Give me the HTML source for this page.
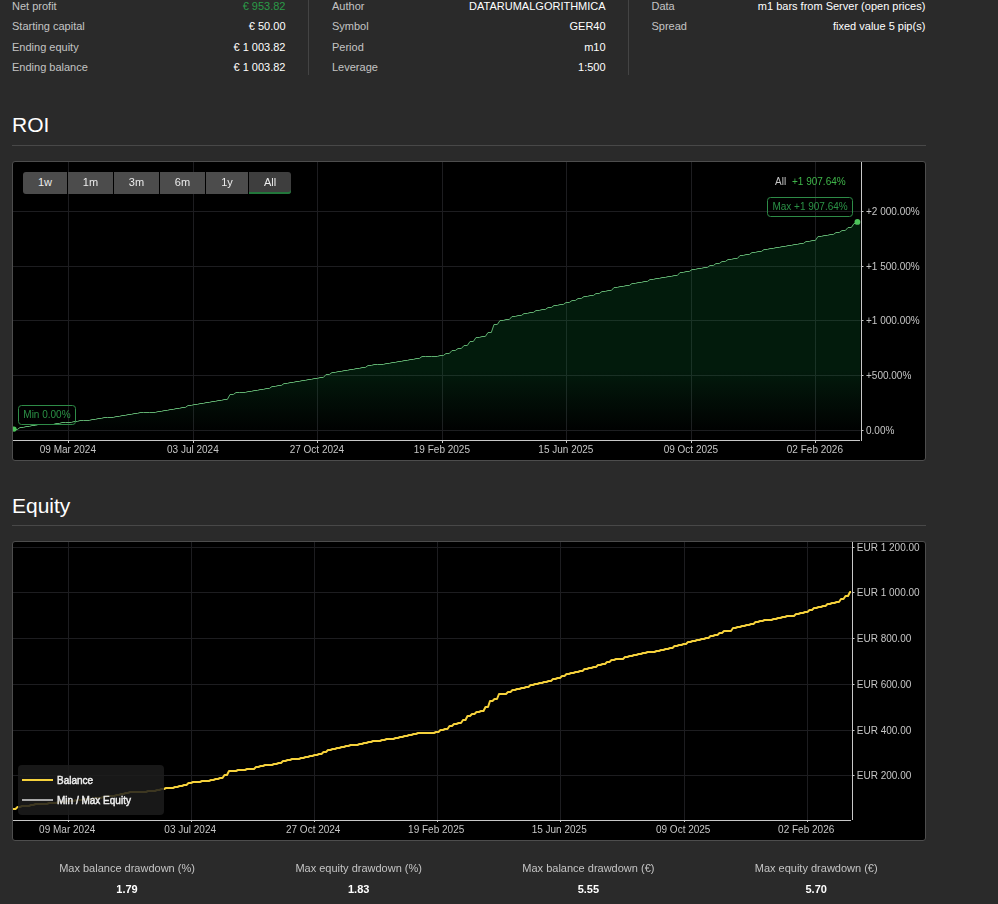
<!DOCTYPE html>
<html><head><meta charset="utf-8"><style>
html,body{margin:0;padding:0;}
body{width:998px;height:904px;overflow:hidden;background:#2a2a2a;position:relative;font-family:"Liberation Sans",sans-serif;}
.lab,.val{position:absolute;font-size:11px;line-height:14px;white-space:nowrap;}
.lab{color:#c4c4c4;}
.val{color:#fff;}
.val.green{color:#2a9a48;}
.sep{position:absolute;top:0;width:1px;height:75px;background:#444;}
h2{position:absolute;margin:0;left:12px;font-size:21px;font-weight:normal;color:#fff;line-height:24px;}
.hr{position:absolute;left:12px;width:914px;height:1px;background:#484848;}
svg{position:absolute;left:0;top:0;will-change:transform;}
.ax{font-size:10px;fill:#c6c6c6;font-family:"Liberation Sans",sans-serif;}
.gl{font-size:10px;fill:#2b9246;font-family:"Liberation Sans",sans-serif;}
.lg{font-size:10px;fill:#eee;font-family:"Liberation Sans",sans-serif;stroke:#eee;stroke-width:0.45px;}
.btn{position:absolute;top:172px;height:22px;line-height:21px;background:#4c4c4c;color:#ececec;font-size:11px;text-align:center;}
.btn.first{border-radius:3px 0 0 3px;}
.btn.last{border-radius:0 3px 3px 0;}
.btn.sel{background:#3e3e3e;box-shadow:inset 0 -2px 0 #22773b;}
.blab,.bval{position:absolute;width:200px;text-align:center;font-size:11px;line-height:14px;white-space:nowrap;}
.blab{color:#c4c4c4;}
.bval{color:#fff;font-weight:bold;}
</style></head><body>
<div class="lab" style="left:12px;top:-1px">Net profit</div>
<div class="val green" style="right:712.5px;top:-1px">€ 953.82</div>
<div class="lab" style="left:12px;top:19px">Starting capital</div>
<div class="val" style="right:712.5px;top:19px">€ 50.00</div>
<div class="lab" style="left:12px;top:40px">Ending equity</div>
<div class="val" style="right:712.5px;top:40px">€ 1 003.82</div>
<div class="lab" style="left:12px;top:60px">Ending balance</div>
<div class="val" style="right:712.5px;top:60px">€ 1 003.82</div>
<div class="lab" style="left:332px;top:-1px">Author</div>
<div class="val" style="right:392.4px;top:-1px">DATARUMALGORITHMICA</div>
<div class="lab" style="left:332px;top:19px">Symbol</div>
<div class="val" style="right:392.4px;top:19px">GER40</div>
<div class="lab" style="left:332px;top:40px">Period</div>
<div class="val" style="right:392.4px;top:40px">m10</div>
<div class="lab" style="left:332px;top:60px">Leverage</div>
<div class="val" style="right:392.4px;top:60px">1:500</div>
<div class="lab" style="left:651.5px;top:-1px">Data</div>
<div class="val" style="right:72.70000000000005px;top:-1px">m1 bars from Server (open prices)</div>
<div class="lab" style="left:651.5px;top:19px">Spread</div>
<div class="val" style="right:72.70000000000005px;top:19px">fixed value 5 pip(s)</div>
<div class="sep" style="left:308px"></div>
<div class="sep" style="left:628px"></div>
<h2 style="top:113px">ROI</h2>
<div class="hr" style="top:145px"></div>
<h2 style="top:494px">Equity</h2>
<div class="hr" style="top:525px"></div>
<svg width="998" height="904" viewBox="0 0 998 904">
<rect x="12.5" y="161.5" width="913" height="299" rx="2.5" fill="#000" stroke="#4d4d4d"/>
<line x1="68.5" y1="162" x2="68.5" y2="440" stroke="#1d1d20"/>
<line x1="193.5" y1="162" x2="193.5" y2="440" stroke="#1d1d20"/>
<line x1="317.5" y1="162" x2="317.5" y2="440" stroke="#1d1d20"/>
<line x1="442.5" y1="162" x2="442.5" y2="440" stroke="#1d1d20"/>
<line x1="566.5" y1="162" x2="566.5" y2="440" stroke="#1d1d20"/>
<line x1="691.5" y1="162" x2="691.5" y2="440" stroke="#1d1d20"/>
<line x1="815.5" y1="162" x2="815.5" y2="440" stroke="#1d1d20"/>
<line x1="13" y1="430.5" x2="861" y2="430.5" stroke="#1d1d20"/>
<line x1="13" y1="375.5" x2="861" y2="375.5" stroke="#1d1d20"/>
<line x1="13" y1="320.5" x2="861" y2="320.5" stroke="#1d1d20"/>
<line x1="13" y1="266.5" x2="861" y2="266.5" stroke="#1d1d20"/>
<line x1="13" y1="211.5" x2="861" y2="211.5" stroke="#1d1d20"/>
<defs><linearGradient id="g1" x1="0" y1="0" x2="0" y2="1"><stop offset="0" stop-color="rgb(10,135,60)" stop-opacity="0.2"/><stop offset="0.68" stop-color="rgb(10,135,60)" stop-opacity="0.2"/><stop offset="0.97" stop-color="rgb(20,130,70)" stop-opacity="0"/></linearGradient></defs>
<path d="M14.0,429.5 L17.3,429.5 L20.0,427.5 L23.3,427.5 L26.0,426.5 L29.3,426.5 L32.0,425.5 L35.3,425.5 L38.0,424.5 L41.3,424.5 L44.0,424.5 L47.3,424.5 L50.0,424.5 L53.3,424.5 L56.0,423.5 L59.3,423.5 L62.0,422.5 L65.3,422.5 L68.0,422.5 L71.3,422.5 L74.0,421.5 L77.3,421.5 L80.0,420.5 L83.3,420.5 L86.0,420.5 L89.3,420.5 L92.0,419.5 L95.3,419.5 L98.0,418.5 L101.3,418.5 L104.0,417.5 L107.3,417.5 L110.0,417.5 L113.3,417.5 L116.0,416.5 L119.3,416.5 L122.0,415.5 L125.3,415.5 L128.0,414.5 L131.3,414.5 L134.0,413.5 L137.3,413.5 L140.0,412.5 L143.3,412.5 L146.0,412.5 L149.3,412.5 L152.0,412.5 L155.3,412.5 L158.0,411.5 L161.3,411.5 L164.0,410.5 L167.3,410.5 L170.0,409.5 L173.3,409.5 L176.0,408.5 L179.3,408.5 L182.0,407.5 L185.3,407.5 L188.0,405.5 L191.3,405.5 L194.0,404.5 L197.3,404.5 L200.0,403.5 L203.3,403.5 L206.0,402.5 L209.3,402.5 L212.0,401.5 L215.3,401.5 L218.0,400.5 L221.3,400.5 L224.0,399.5 L227.3,399.5 L230.0,394.5 L233.3,394.5 L236.0,392.5 L239.3,392.5 L242.0,392.5 L245.3,392.5 L248.0,391.5 L251.3,391.5 L254.0,390.5 L257.3,390.5 L260.0,389.5 L263.3,389.5 L266.0,388.5 L269.3,388.5 L272.0,386.5 L275.3,386.5 L278.0,385.5 L281.3,385.5 L284.0,383.5 L287.3,383.5 L290.0,382.5 L293.3,382.5 L296.0,381.5 L299.3,381.5 L302.0,380.5 L305.3,380.5 L308.0,379.5 L311.3,379.5 L314.0,378.5 L317.3,378.5 L320.0,377.5 L323.3,377.5 L326.0,374.5 L329.3,374.5 L332.0,372.5 L335.3,372.5 L338.0,371.5 L341.3,371.5 L344.0,370.5 L347.3,370.5 L350.0,369.5 L353.3,369.5 L356.0,368.5 L359.3,368.5 L362.0,367.5 L365.3,367.5 L368.0,365.5 L371.3,365.5 L374.0,364.5 L377.3,364.5 L380.0,364.5 L383.3,364.5 L386.0,363.5 L389.3,363.5 L392.0,362.5 L395.3,362.5 L398.0,361.5 L401.3,361.5 L404.0,360.5 L407.3,360.5 L410.0,359.5 L413.3,359.5 L416.0,358.5 L419.3,358.5 L422.0,356.5 L425.3,356.5 L428.0,356.5 L431.3,356.5 L434.0,356.5 L437.3,356.5 L440.0,355.5 L443.3,355.5 L446.0,353.5 L449.3,353.5 L452.0,350.5 L455.3,350.5 L458.0,348.5 L461.3,348.5 L464.0,345.5 L467.3,345.5 L470.0,341.5 L473.3,341.5 L476.0,337.5 L479.3,337.5 L482.0,336.5 L485.3,336.5 L488.0,332.5 L491.3,332.5 L494.0,324.5 L497.3,324.5 L500.0,320.5 L503.3,320.5 L506.0,319.5 L509.3,319.5 L512.0,316.5 L515.3,316.5 L518.0,315.5 L521.3,315.5 L524.0,313.5 L527.3,313.5 L530.0,312.5 L533.3,312.5 L536.0,310.5 L539.3,310.5 L542.0,309.5 L545.3,309.5 L548.0,307.5 L551.3,307.5 L554.0,305.5 L557.3,305.5 L560.0,304.5 L563.3,304.5 L566.0,302.5 L569.3,302.5 L572.0,300.5 L575.3,300.5 L578.0,298.5 L581.3,298.5 L584.0,296.5 L587.3,296.5 L590.0,295.5 L593.3,295.5 L596.0,293.5 L599.3,293.5 L602.0,291.5 L605.3,291.5 L608.0,290.5 L611.3,290.5 L614.0,287.5 L617.3,287.5 L620.0,286.5 L623.3,286.5 L626.0,285.5 L629.3,285.5 L632.0,283.5 L635.3,283.5 L638.0,282.5 L641.3,282.5 L644.0,281.5 L647.3,281.5 L650.0,279.5 L653.3,279.5 L656.0,278.5 L659.3,278.5 L662.0,277.5 L665.3,277.5 L668.0,276.5 L671.3,276.5 L674.0,275.5 L677.3,275.5 L680.0,272.5 L683.3,272.5 L686.0,271.5 L689.3,271.5 L692.0,269.5 L695.3,269.5 L698.0,268.5 L701.3,268.5 L704.0,267.5 L707.3,267.5 L710.0,265.5 L713.3,265.5 L716.0,263.5 L719.3,263.5 L722.0,261.5 L725.3,261.5 L728.0,259.5 L731.3,259.5 L734.0,258.5 L737.3,258.5 L740.0,255.5 L743.3,255.5 L746.0,254.5 L749.3,254.5 L752.0,252.5 L755.3,252.5 L758.0,251.5 L761.3,251.5 L764.0,249.5 L767.3,249.5 L770.0,248.5 L773.3,248.5 L776.0,247.5 L779.3,247.5 L782.0,246.5 L785.3,246.5 L788.0,245.5 L791.3,245.5 L794.0,244.5 L797.3,244.5 L800.0,243.5 L803.3,243.5 L806.0,241.5 L809.3,241.5 L812.0,240.5 L815.3,240.5 L818.0,236.5 L821.3,236.5 L824.0,235.5 L827.3,235.5 L830.0,234.5 L833.3,234.5 L836.0,232.5 L839.3,232.5 L842.0,230.5 L845.3,230.5 L848.0,227.5 L851.3,227.5 L854.0,223.5 L855.9,223.5 L857.4,221.5 L857.4,221.5 L860.3,221 L860.3,440 L14,440 Z" fill="url(#g1)"/>
<path d="M14.0,429.5 L17.3,429.5 L20.0,427.5 L23.3,427.5 L26.0,426.5 L29.3,426.5 L32.0,425.5 L35.3,425.5 L38.0,424.5 L41.3,424.5 L44.0,424.5 L47.3,424.5 L50.0,424.5 L53.3,424.5 L56.0,423.5 L59.3,423.5 L62.0,422.5 L65.3,422.5 L68.0,422.5 L71.3,422.5 L74.0,421.5 L77.3,421.5 L80.0,420.5 L83.3,420.5 L86.0,420.5 L89.3,420.5 L92.0,419.5 L95.3,419.5 L98.0,418.5 L101.3,418.5 L104.0,417.5 L107.3,417.5 L110.0,417.5 L113.3,417.5 L116.0,416.5 L119.3,416.5 L122.0,415.5 L125.3,415.5 L128.0,414.5 L131.3,414.5 L134.0,413.5 L137.3,413.5 L140.0,412.5 L143.3,412.5 L146.0,412.5 L149.3,412.5 L152.0,412.5 L155.3,412.5 L158.0,411.5 L161.3,411.5 L164.0,410.5 L167.3,410.5 L170.0,409.5 L173.3,409.5 L176.0,408.5 L179.3,408.5 L182.0,407.5 L185.3,407.5 L188.0,405.5 L191.3,405.5 L194.0,404.5 L197.3,404.5 L200.0,403.5 L203.3,403.5 L206.0,402.5 L209.3,402.5 L212.0,401.5 L215.3,401.5 L218.0,400.5 L221.3,400.5 L224.0,399.5 L227.3,399.5 L230.0,394.5 L233.3,394.5 L236.0,392.5 L239.3,392.5 L242.0,392.5 L245.3,392.5 L248.0,391.5 L251.3,391.5 L254.0,390.5 L257.3,390.5 L260.0,389.5 L263.3,389.5 L266.0,388.5 L269.3,388.5 L272.0,386.5 L275.3,386.5 L278.0,385.5 L281.3,385.5 L284.0,383.5 L287.3,383.5 L290.0,382.5 L293.3,382.5 L296.0,381.5 L299.3,381.5 L302.0,380.5 L305.3,380.5 L308.0,379.5 L311.3,379.5 L314.0,378.5 L317.3,378.5 L320.0,377.5 L323.3,377.5 L326.0,374.5 L329.3,374.5 L332.0,372.5 L335.3,372.5 L338.0,371.5 L341.3,371.5 L344.0,370.5 L347.3,370.5 L350.0,369.5 L353.3,369.5 L356.0,368.5 L359.3,368.5 L362.0,367.5 L365.3,367.5 L368.0,365.5 L371.3,365.5 L374.0,364.5 L377.3,364.5 L380.0,364.5 L383.3,364.5 L386.0,363.5 L389.3,363.5 L392.0,362.5 L395.3,362.5 L398.0,361.5 L401.3,361.5 L404.0,360.5 L407.3,360.5 L410.0,359.5 L413.3,359.5 L416.0,358.5 L419.3,358.5 L422.0,356.5 L425.3,356.5 L428.0,356.5 L431.3,356.5 L434.0,356.5 L437.3,356.5 L440.0,355.5 L443.3,355.5 L446.0,353.5 L449.3,353.5 L452.0,350.5 L455.3,350.5 L458.0,348.5 L461.3,348.5 L464.0,345.5 L467.3,345.5 L470.0,341.5 L473.3,341.5 L476.0,337.5 L479.3,337.5 L482.0,336.5 L485.3,336.5 L488.0,332.5 L491.3,332.5 L494.0,324.5 L497.3,324.5 L500.0,320.5 L503.3,320.5 L506.0,319.5 L509.3,319.5 L512.0,316.5 L515.3,316.5 L518.0,315.5 L521.3,315.5 L524.0,313.5 L527.3,313.5 L530.0,312.5 L533.3,312.5 L536.0,310.5 L539.3,310.5 L542.0,309.5 L545.3,309.5 L548.0,307.5 L551.3,307.5 L554.0,305.5 L557.3,305.5 L560.0,304.5 L563.3,304.5 L566.0,302.5 L569.3,302.5 L572.0,300.5 L575.3,300.5 L578.0,298.5 L581.3,298.5 L584.0,296.5 L587.3,296.5 L590.0,295.5 L593.3,295.5 L596.0,293.5 L599.3,293.5 L602.0,291.5 L605.3,291.5 L608.0,290.5 L611.3,290.5 L614.0,287.5 L617.3,287.5 L620.0,286.5 L623.3,286.5 L626.0,285.5 L629.3,285.5 L632.0,283.5 L635.3,283.5 L638.0,282.5 L641.3,282.5 L644.0,281.5 L647.3,281.5 L650.0,279.5 L653.3,279.5 L656.0,278.5 L659.3,278.5 L662.0,277.5 L665.3,277.5 L668.0,276.5 L671.3,276.5 L674.0,275.5 L677.3,275.5 L680.0,272.5 L683.3,272.5 L686.0,271.5 L689.3,271.5 L692.0,269.5 L695.3,269.5 L698.0,268.5 L701.3,268.5 L704.0,267.5 L707.3,267.5 L710.0,265.5 L713.3,265.5 L716.0,263.5 L719.3,263.5 L722.0,261.5 L725.3,261.5 L728.0,259.5 L731.3,259.5 L734.0,258.5 L737.3,258.5 L740.0,255.5 L743.3,255.5 L746.0,254.5 L749.3,254.5 L752.0,252.5 L755.3,252.5 L758.0,251.5 L761.3,251.5 L764.0,249.5 L767.3,249.5 L770.0,248.5 L773.3,248.5 L776.0,247.5 L779.3,247.5 L782.0,246.5 L785.3,246.5 L788.0,245.5 L791.3,245.5 L794.0,244.5 L797.3,244.5 L800.0,243.5 L803.3,243.5 L806.0,241.5 L809.3,241.5 L812.0,240.5 L815.3,240.5 L818.0,236.5 L821.3,236.5 L824.0,235.5 L827.3,235.5 L830.0,234.5 L833.3,234.5 L836.0,232.5 L839.3,232.5 L842.0,230.5 L845.3,230.5 L848.0,227.5 L851.3,227.5 L854.0,223.5 L855.9,223.5 L857.4,221.5 L857.4,221.5" fill="none" stroke="#60b070" stroke-width="1"/>
<line x1="861.5" y1="162" x2="861.5" y2="441" stroke="#c8c8c8"/>
<line x1="13" y1="440.5" x2="860" y2="440.5" stroke="#c8c8c8"/>
<line x1="862" y1="430.5" x2="863.5" y2="430.5" stroke="#c8c8c8"/>
<text x="866" y="433.5" class="ax">0.00%</text>
<line x1="862" y1="375.5" x2="863.5" y2="375.5" stroke="#c8c8c8"/>
<text x="866" y="378.5" class="ax">+500.00%</text>
<line x1="862" y1="320.5" x2="863.5" y2="320.5" stroke="#c8c8c8"/>
<text x="866" y="323.5" class="ax">+1 000.00%</text>
<line x1="862" y1="266.5" x2="863.5" y2="266.5" stroke="#c8c8c8"/>
<text x="866" y="269.5" class="ax">+1 500.00%</text>
<line x1="862" y1="211.5" x2="863.5" y2="211.5" stroke="#c8c8c8"/>
<text x="866" y="214.5" class="ax">+2 000.00%</text>
<line x1="68.5" y1="441" x2="68.5" y2="443" stroke="#c8c8c8"/>
<text x="67.9" y="453" class="ax" text-anchor="middle">09 Mar 2024</text>
<line x1="193.5" y1="441" x2="193.5" y2="443" stroke="#c8c8c8"/>
<text x="192.9" y="453" class="ax" text-anchor="middle">03 Jul 2024</text>
<line x1="317.5" y1="441" x2="317.5" y2="443" stroke="#c8c8c8"/>
<text x="316.9" y="453" class="ax" text-anchor="middle">27 Oct 2024</text>
<line x1="442.5" y1="441" x2="442.5" y2="443" stroke="#c8c8c8"/>
<text x="441.9" y="453" class="ax" text-anchor="middle">19 Feb 2025</text>
<line x1="566.5" y1="441" x2="566.5" y2="443" stroke="#c8c8c8"/>
<text x="565.9" y="453" class="ax" text-anchor="middle">15 Jun 2025</text>
<line x1="691.5" y1="441" x2="691.5" y2="443" stroke="#c8c8c8"/>
<text x="690.9" y="453" class="ax" text-anchor="middle">09 Oct 2025</text>
<line x1="815.5" y1="441" x2="815.5" y2="443" stroke="#c8c8c8"/>
<text x="814.9" y="453" class="ax" text-anchor="middle">02 Feb 2026</text>
<defs><clipPath id="pc"><rect x="13" y="162" width="848" height="278"/></clipPath></defs>
<circle cx="14" cy="429.1" r="2.6" fill="#4cc35a" clip-path="url(#pc)"/>
<circle cx="857.4" cy="221.9" r="2.9" fill="#4cc35a"/>
<rect x="18.5" y="405.5" width="57" height="19" rx="3" fill="none" stroke="#2e8b47"/>
<text x="23.3" y="418" class="gl">Min 0.00%</text>
<rect x="767.5" y="197.5" width="85" height="19" rx="3" fill="none" stroke="#2e8b47"/>
<text x="772.4" y="210" class="gl">Max +1 907.64%</text>
<text x="775" y="185" class="ax">All</text>
<text x="792" y="185" class="ax" fill="#3fb54a" style="fill:#3fb54a">+1 907.64%</text>
<rect x="12.5" y="541.5" width="913" height="299" rx="2.5" fill="#000" stroke="#4d4d4d"/>
<line x1="68.5" y1="542" x2="68.5" y2="820" stroke="#1d1d20"/>
<line x1="191.5" y1="542" x2="191.5" y2="820" stroke="#1d1d20"/>
<line x1="314.5" y1="542" x2="314.5" y2="820" stroke="#1d1d20"/>
<line x1="437.5" y1="542" x2="437.5" y2="820" stroke="#1d1d20"/>
<line x1="560.5" y1="542" x2="560.5" y2="820" stroke="#1d1d20"/>
<line x1="684.5" y1="542" x2="684.5" y2="820" stroke="#1d1d20"/>
<line x1="807.5" y1="542" x2="807.5" y2="820" stroke="#1d1d20"/>
<line x1="13" y1="775.5" x2="852" y2="775.5" stroke="#1d1d20"/>
<line x1="13" y1="730.5" x2="852" y2="730.5" stroke="#1d1d20"/>
<line x1="13" y1="684.5" x2="852" y2="684.5" stroke="#1d1d20"/>
<line x1="13" y1="638.5" x2="852" y2="638.5" stroke="#1d1d20"/>
<line x1="13" y1="592.5" x2="852" y2="592.5" stroke="#1d1d20"/>
<line x1="13" y1="547.5" x2="852" y2="547.5" stroke="#1d1d20"/>
<path d="M13.0,809.0 L15.5,809.0 L17.5,807.0 L20.0,807.0 L22.0,806.0 L24.5,806.0 L26.5,806.0 L29.0,806.0 L31.0,805.0 L33.5,805.0 L35.5,804.0 L38.0,804.0 L40.0,804.0 L42.5,804.0 L44.5,804.0 L47.0,804.0 L49.0,803.0 L51.5,803.0 L53.5,803.0 L56.0,803.0 L58.0,802.0 L60.5,802.0 L62.5,802.0 L65.0,802.0 L67.0,801.0 L69.5,801.0 L71.5,801.0 L74.0,801.0 L76.0,800.0 L78.5,800.0 L80.5,800.0 L83.0,800.0 L85.0,799.0 L87.5,799.0 L89.5,799.0 L92.0,799.0 L94.0,798.0 L96.5,798.0 L98.5,798.0 L101.0,798.0 L103.0,797.0 L105.5,797.0 L107.5,796.0 L110.0,796.0 L112.0,796.0 L114.5,796.0 L116.5,795.0 L119.0,795.0 L121.0,794.0 L123.5,794.0 L125.5,793.0 L128.0,793.0 L130.0,792.0 L132.5,792.0 L134.5,792.0 L137.0,792.0 L139.0,792.0 L141.5,792.0 L143.5,792.0 L146.0,792.0 L148.0,791.0 L150.5,791.0 L152.5,791.0 L155.0,791.0 L157.0,790.0 L159.5,790.0 L161.5,789.0 L164.0,789.0 L166.0,788.0 L168.5,788.0 L170.5,788.0 L173.0,788.0 L175.0,787.0 L177.5,787.0 L179.5,786.0 L182.0,786.0 L184.0,785.0 L186.5,785.0 L188.5,783.0 L191.0,783.0 L193.0,782.0 L195.5,782.0 L197.5,782.0 L200.0,782.0 L202.0,781.0 L204.5,781.0 L206.5,781.0 L209.0,781.0 L211.0,780.0 L213.5,780.0 L215.5,779.0 L218.0,779.0 L220.0,778.0 L222.5,778.0 L224.5,775.0 L227.0,775.0 L229.0,771.0 L231.5,771.0 L233.5,771.0 L236.0,771.0 L238.0,770.0 L240.5,770.0 L242.5,770.0 L245.0,770.0 L247.0,769.0 L249.5,769.0 L251.5,769.0 L254.0,769.0 L256.0,767.0 L258.5,767.0 L260.5,766.0 L263.0,766.0 L265.0,765.0 L267.5,765.0 L269.5,765.0 L272.0,765.0 L274.0,764.0 L276.5,764.0 L278.5,763.0 L281.0,763.0 L283.0,761.0 L285.5,761.0 L287.5,760.0 L290.0,760.0 L292.0,759.0 L294.5,759.0 L296.5,759.0 L299.0,759.0 L301.0,758.0 L303.5,758.0 L305.5,757.0 L308.0,757.0 L310.0,756.0 L312.5,756.0 L314.5,755.0 L317.0,755.0 L319.0,754.0 L321.5,754.0 L323.5,752.0 L326.0,752.0 L328.0,750.0 L330.5,750.0 L332.5,749.0 L335.0,749.0 L337.0,748.0 L339.5,748.0 L341.5,747.0 L344.0,747.0 L346.0,746.0 L348.5,746.0 L350.5,745.0 L353.0,745.0 L355.0,745.0 L357.5,745.0 L359.5,744.0 L362.0,744.0 L364.0,743.0 L366.5,743.0 L368.5,742.0 L371.0,742.0 L373.0,741.0 L375.5,741.0 L377.5,741.0 L380.0,741.0 L382.0,740.0 L384.5,740.0 L386.5,739.0 L389.0,739.0 L391.0,739.0 L393.5,739.0 L395.5,738.0 L398.0,738.0 L400.0,737.0 L402.5,737.0 L404.5,736.0 L407.0,736.0 L409.0,735.0 L411.5,735.0 L413.5,734.0 L416.0,734.0 L418.0,733.0 L420.5,733.0 L422.5,733.0 L425.0,733.0 L427.0,733.0 L429.5,733.0 L431.5,733.0 L434.0,733.0 L436.0,732.0 L438.5,732.0 L440.5,730.0 L443.0,730.0 L445.0,729.0 L447.5,729.0 L449.5,726.0 L452.0,726.0 L454.0,724.0 L456.5,724.0 L458.5,723.0 L461.0,723.0 L463.0,720.0 L465.5,720.0 L467.5,716.0 L470.0,716.0 L472.0,714.0 L474.5,714.0 L476.5,712.0 L479.0,712.0 L481.0,711.0 L483.5,711.0 L485.5,707.0 L488.0,707.0 L490.0,701.0 L492.5,701.0 L494.5,699.0 L497.0,699.0 L499.0,694.0 L501.5,694.0 L503.5,694.0 L506.0,694.0 L508.0,692.0 L510.5,692.0 L512.5,690.0 L515.0,690.0 L517.0,689.0 L519.5,689.0 L521.5,688.0 L524.0,688.0 L526.0,687.0 L528.5,687.0 L530.5,685.0 L533.0,685.0 L535.0,684.0 L537.5,684.0 L539.5,683.0 L542.0,683.0 L544.0,682.0 L546.5,682.0 L548.5,681.0 L551.0,681.0 L553.0,679.0 L555.5,679.0 L557.5,678.0 L560.0,678.0 L562.0,676.0 L564.5,676.0 L566.5,674.0 L569.0,674.0 L571.0,673.0 L573.5,673.0 L575.5,672.0 L578.0,672.0 L580.0,671.0 L582.5,671.0 L584.5,669.0 L587.0,669.0 L589.0,668.0 L591.5,668.0 L593.5,667.0 L596.0,667.0 L598.0,665.0 L600.5,665.0 L602.5,664.0 L605.0,664.0 L607.0,662.0 L609.5,662.0 L611.5,660.0 L614.0,660.0 L616.0,659.0 L618.5,659.0 L620.5,659.0 L623.0,659.0 L625.0,657.0 L627.5,657.0 L629.5,656.0 L632.0,656.0 L634.0,655.0 L636.5,655.0 L638.5,654.0 L641.0,654.0 L643.0,653.0 L645.5,653.0 L647.5,652.0 L650.0,652.0 L652.0,652.0 L654.5,652.0 L656.5,651.0 L659.0,651.0 L661.0,650.0 L663.5,650.0 L665.5,649.0 L668.0,649.0 L670.0,648.0 L672.5,648.0 L674.5,646.0 L677.0,646.0 L679.0,645.0 L681.5,645.0 L683.5,644.0 L686.0,644.0 L688.0,642.0 L690.5,642.0 L692.5,641.0 L695.0,641.0 L697.0,640.0 L699.5,640.0 L701.5,639.0 L704.0,639.0 L706.0,638.0 L708.5,638.0 L710.5,636.0 L713.0,636.0 L715.0,635.0 L717.5,635.0 L719.5,633.0 L722.0,633.0 L724.0,631.0 L726.5,631.0 L728.5,631.0 L731.0,631.0 L733.0,628.0 L735.5,628.0 L737.5,627.0 L740.0,627.0 L742.0,626.0 L744.5,626.0 L746.5,625.0 L749.0,625.0 L751.0,624.0 L753.5,624.0 L755.5,622.0 L758.0,622.0 L760.0,621.0 L762.5,621.0 L764.5,620.0 L767.0,620.0 L769.0,620.0 L771.5,620.0 L773.5,619.0 L776.0,619.0 L778.0,618.0 L780.5,618.0 L782.5,617.0 L785.0,617.0 L787.0,616.0 L789.5,616.0 L791.5,616.0 L794.0,616.0 L796.0,614.0 L798.5,614.0 L800.5,613.0 L803.0,613.0 L805.0,612.0 L807.5,612.0 L809.5,610.0 L812.0,610.0 L814.0,608.0 L816.5,608.0 L818.5,607.0 L821.0,607.0 L823.0,606.0 L825.5,606.0 L827.5,604.0 L830.0,604.0 L832.0,603.0 L834.5,603.0 L836.5,602.0 L839.0,602.0 L841.0,599.0 L843.5,599.0 L845.5,596.0 L848.0,596.0 L850.0,592.0 L850.5,592.0 L851.0,592.0 L851.0,592.0" fill="none" stroke="#f6d23c" stroke-width="2" stroke-linejoin="round"/>
<line x1="852.5" y1="542" x2="852.5" y2="820" stroke="#c8c8c8"/>
<line x1="13" y1="820.5" x2="851" y2="820.5" stroke="#c8c8c8"/>
<line x1="853" y1="775.5" x2="854.5" y2="775.5" stroke="#c8c8c8"/>
<text x="856.8" y="778.5" class="ax">EUR 200.00</text>
<line x1="853" y1="730.5" x2="854.5" y2="730.5" stroke="#c8c8c8"/>
<text x="856.8" y="733.5" class="ax">EUR 400.00</text>
<line x1="853" y1="684.5" x2="854.5" y2="684.5" stroke="#c8c8c8"/>
<text x="856.8" y="687.5" class="ax">EUR 600.00</text>
<line x1="853" y1="638.5" x2="854.5" y2="638.5" stroke="#c8c8c8"/>
<text x="856.8" y="641.5" class="ax">EUR 800.00</text>
<line x1="853" y1="592.5" x2="854.5" y2="592.5" stroke="#c8c8c8"/>
<text x="856.8" y="595.5" class="ax">EUR 1 000.00</text>
<line x1="853" y1="547.5" x2="854.5" y2="547.5" stroke="#c8c8c8"/>
<text x="856.8" y="550.5" class="ax">EUR 1 200.00</text>
<line x1="68.5" y1="821" x2="68.5" y2="822" stroke="#c8c8c8"/>
<text x="67.2" y="833" class="ax" text-anchor="middle">09 Mar 2024</text>
<line x1="191.5" y1="821" x2="191.5" y2="822" stroke="#c8c8c8"/>
<text x="190.2" y="833" class="ax" text-anchor="middle">03 Jul 2024</text>
<line x1="314.5" y1="821" x2="314.5" y2="822" stroke="#c8c8c8"/>
<text x="313.2" y="833" class="ax" text-anchor="middle">27 Oct 2024</text>
<line x1="437.5" y1="821" x2="437.5" y2="822" stroke="#c8c8c8"/>
<text x="436.2" y="833" class="ax" text-anchor="middle">19 Feb 2025</text>
<line x1="560.5" y1="821" x2="560.5" y2="822" stroke="#c8c8c8"/>
<text x="559.2" y="833" class="ax" text-anchor="middle">15 Jun 2025</text>
<line x1="684.5" y1="821" x2="684.5" y2="822" stroke="#c8c8c8"/>
<text x="683.2" y="833" class="ax" text-anchor="middle">09 Oct 2025</text>
<line x1="807.5" y1="821" x2="807.5" y2="822" stroke="#c8c8c8"/>
<text x="806.2" y="833" class="ax" text-anchor="middle">02 Feb 2026</text>
<rect x="18" y="765" width="146" height="50" rx="4" fill="rgba(28,28,28,0.85)"/>
<line x1="22" y1="780" x2="53" y2="780" stroke="#f6d23c" stroke-width="2"/>
<line x1="22" y1="800" x2="53" y2="800" stroke="#a8a8a8" stroke-width="2"/>
<text x="57" y="783.6" class="lg">Balance</text>
<text x="57" y="803.5" class="lg">Min / Max Equity</text>
</svg>
<div class="btn first" style="left:23px;width:44px">1w</div>
<div class="btn" style="left:68px;width:45px">1m</div>
<div class="btn" style="left:114px;width:45px">3m</div>
<div class="btn" style="left:160px;width:45px">6m</div>
<div class="btn" style="left:206px;width:42px">1y</div>
<div class="btn last sel" style="left:249px;width:42px">All</div>
<div class="blab" style="left:27px;top:861px">Max balance drawdown (%)</div>
<div class="bval" style="left:27px;top:882px">1.79</div>
<div class="blab" style="left:258.7px;top:861px">Max equity drawdown (%)</div>
<div class="bval" style="left:258.7px;top:882px">1.83</div>
<div class="blab" style="left:488.4px;top:861px">Max balance drawdown (€)</div>
<div class="bval" style="left:488.4px;top:882px">5.55</div>
<div class="blab" style="left:716.2px;top:861px">Max equity drawdown (€)</div>
<div class="bval" style="left:716.2px;top:882px">5.70</div>
</body></html>
